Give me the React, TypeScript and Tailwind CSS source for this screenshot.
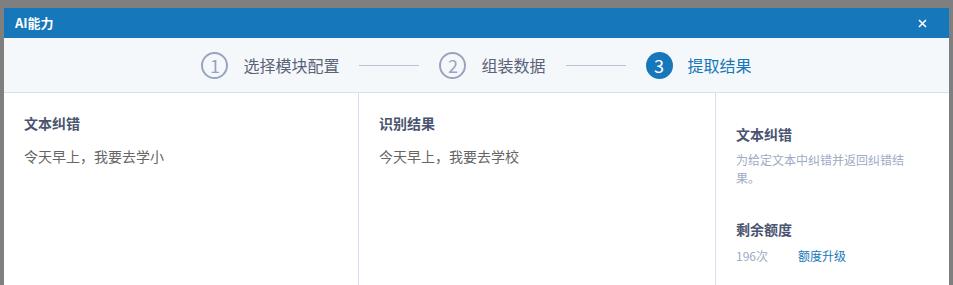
const font = { fontFamily: '"Microsoft YaHei", "Noto Sans CJK SC", "Noto Sans", sans-serif' };

type Step = { n: number; label: string; active?: boolean };

const steps: Step[] = [
  { n: 1, label: "选择模块配置" },
  { n: 2, label: "组装数据" },
  { n: 3, label: "提取结果", active: true },
];

function StepItem({ step }: { step: Step }) {
  return (
    <div className="flex items-center gap-[15px]">
      {step.active ? (
        <div className="flex h-[27px] w-[27px] items-center justify-center rounded-full bg-[#1677ba] text-[18px] leading-none text-white">
          {step.n}
        </div>
      ) : (
        <div className="flex h-[27px] w-[27px] items-center justify-center rounded-full border-2 border-[#98a4bf] text-[18px] leading-none text-[#98a4bf]">
          {step.n}
        </div>
      )}
      <div className={step.active ? "text-[16px] text-[#1677ba]" : "text-[16px] text-[#5a6378]"}>
        {step.label}
      </div>
    </div>
  );
}

export default function App() {
  return (
    <div className="h-[285px] overflow-hidden bg-[#7f7f7f] px-1 pt-2" style={font}>
      <div className="flex h-full flex-col bg-white">
        <div className="flex h-[30px] items-center justify-between bg-[#1677ba] pl-[11px] pr-[22px]">
          <div className="text-[13px] font-bold text-white">AI能力</div>
          <svg width="9" height="9" viewBox="0 0 9 9" className="text-white">
            <path d="M1 1 L8 8 M8 1 L1 8" stroke="currentColor" strokeWidth="1.6" />
          </svg>
        </div>

        <div className="flex h-[55px] items-center justify-center gap-5 border-b border-[#d4e2ef] bg-[#f5f8fb]">
          {steps.map((s, i) => (
            <div key={s.n} className="flex items-center gap-5">
              {i > 0 && <div className="h-px w-[60px] bg-[#b8c4d6]" />}
              <StepItem step={s} />
            </div>
          ))}
        </div>

        <div className="flex flex-1">
          <div className="w-[355px] border-r border-[#d4e2ef] px-5 pt-5">
            <div className="text-[14px] font-bold leading-5 text-[#4a5470]">文本纠错</div>
            <div className="mt-[13px] text-[14px] leading-5 text-[#666]">令天早上，我要去学小</div>
          </div>
          <div className="flex-1 border-r border-[#d4e2ef] px-5 pt-5">
            <div className="text-[14px] font-bold leading-5 text-[#4a5470]">识别结果</div>
            <div className="mt-[13px] text-[14px] leading-5 text-[#666]">今天早上，我要去学校</div>
          </div>
          <div className="w-[233px] px-5 pt-[31px]">
            <div className="text-[14px] font-bold leading-5 text-[#4a5470]">文本纠错</div>
            <div className="mt-[7px] max-w-[172px] text-[12px] leading-[18px] text-[#9eabc4]">
              为给定文本中纠错并返回纠错结果。
            </div>
            <div className="mt-8 text-[14px] font-bold leading-5 text-[#4a5470]">剩余额度</div>
            <div className="mt-2 flex items-center text-[12px] leading-[18px]">
              <span className="w-[62px] text-[#9eabc4]">196次</span>
              <span className="text-[#1677ba]">额度升级</span>
            </div>
          </div>
        </div>
      </div>
    </div>
  );
}
